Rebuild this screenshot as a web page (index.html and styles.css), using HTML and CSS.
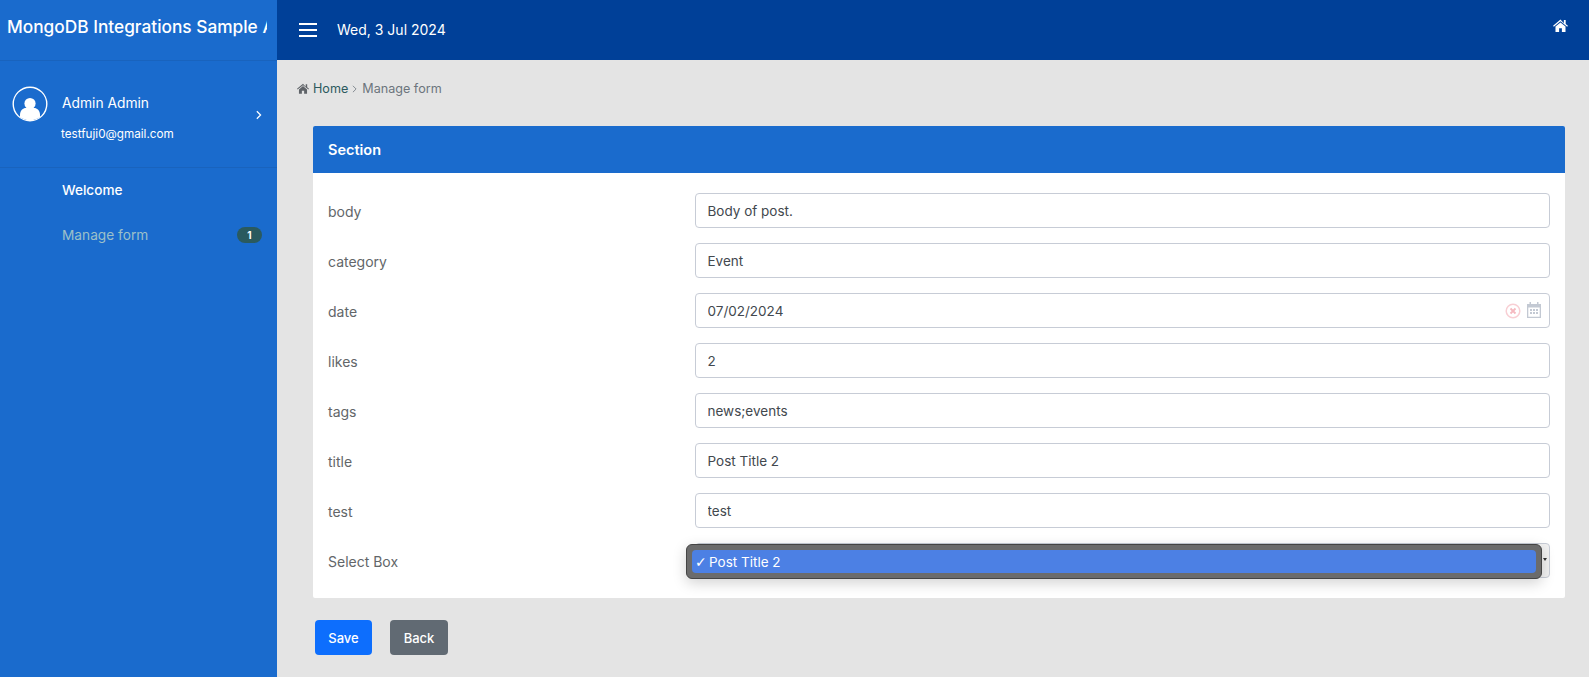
FILE: index.html
```html
<!DOCTYPE html>
<html lang="en">
<head>
<meta charset="utf-8">
<title>Manage form</title>
<link rel="stylesheet" href="styles.css">
</head>
<body>
<div class="app">
  <aside class="sidebar">
    <div class="brand"><span class="brand-text">MongoDB Integrations Sample App</span></div>
    <div class="user">
      <div class="user-top">
        <svg class="avatar" viewBox="0 0 36 36"><defs><clipPath id="av"><circle cx="18" cy="18" r="16.4"/></clipPath></defs><circle cx="18" cy="18" r="16.8" fill="none" stroke="#fff" stroke-width="1.4"/><g clip-path="url(#av)" fill="#fff"><circle cx="18" cy="17.5" r="5.6"/><path d="M8 34v-5c0-4.500 3-7 6-7h8c3 0 6 2.500 6 7v5z"/></g></svg>
        <span class="user-name">Admin Admin</span>
      </div>
      <div class="user-mail">testfuji0@gmail.com</div>
      <svg class="user-chev" viewBox="0 0 8 12"><path d="M2 1.500 6.500 6 2 10.500" fill="none" stroke="#fff" stroke-width="1.500"/></svg>
    </div>
    <nav class="nav">
      <a class="nav-item active">Welcome</a>
      <a class="nav-item muted">Manage form<span class="badge">1</span></a>
    </nav>
  </aside>
  <div class="main">
    <header class="topbar">
      <div class="burger"><i></i><i></i><i></i></div>
      <span class="date">Wed, 3 Jul 2024</span>
      <svg class="top-home" viewBox="0 0 16 14"><path fill="#fff" d="M8 .6 0 7.400l.8 1L8 2.500l7.200 5.900.8-1-2.400-2V1.200h-2v3.500zM2.600 8.200V14h3.900v-4h3v4h3.900V8.200L8 3.800z"/></svg>
    </header>
    <div class="content">
      <div class="crumbs">
        <svg class="crumb-home" viewBox="0 0 16 14"><path fill="#5f6368" d="M8 .6 0 7.400l.8 1L8 2.500l7.200 5.900.8-1-2.400-2V1.200h-2v3.500zM2.600 8.200V14h3.900v-4h3v4h3.900V8.200L8 3.800z"/></svg>
        <a class="crumb-link">Home</a>
        <svg class="crumb-sep" viewBox="0 0 6 10"><path d="M1 1l4 4-4 4" fill="none" stroke="#6c757d" stroke-width="1"/></svg>
        <span class="crumb-cur">Manage form</span>
      </div>
      <section class="card">
        <div class="card-head">Section</div>
        <div class="card-body">
          <div class="row"><label class="lbl">body</label><div class="field"><input class="input" value="Body of post."></div></div>
          <div class="row"><label class="lbl">category</label><div class="field"><input class="input" value="Event"></div></div>
          <div class="row"><label class="lbl">date</label><div class="field"><input class="input" value="07/02/2024">
            <svg class="ic-clear" viewBox="0 0 16 16"><circle cx="8" cy="8" r="6.800" fill="none" stroke="#f8cfd4" stroke-width="1.500"/><path d="M5.500 5.500l5 5m0-5-5 5" stroke="#f5b9c0" stroke-width="1.800"/></svg>
            <svg class="ic-cal" viewBox="0 0 14 16"><path fill="#c3c9d3" d="M2.500 0h1.500v2h6V0h1.500v2H14v14H0V2h2.500zM1.300 5.500v9.200h11.400V5.500z"/><path fill="#c3c9d3" d="M3 7h2v2H3zM6 7h2v2H6zM9 7h2v2H9zM3 10h2v2H3zM6 10h2v2H6zM9 10h2v2H9z"/></svg>
          </div></div>
          <div class="row"><label class="lbl">likes</label><div class="field"><input class="input" value="2"></div></div>
          <div class="row"><label class="lbl">tags</label><div class="field"><input class="input" value="news;events"></div></div>
          <div class="row"><label class="lbl">title</label><div class="field"><input class="input" value="Post Title 2"></div></div>
          <div class="row"><label class="lbl">test</label><div class="field"><input class="input" value="test"></div></div>
          <div class="row"><label class="lbl">Select Box</label><div class="field"><div class="input select"><span class="caret"></span></div>
            <div class="popup"><div class="popup-opt"><span class="tick">✓</span>Post Title 2</div></div>
          </div></div>
        </div>
      </section>
      <div class="actions"><button class="btn save">Save</button><button class="btn back">Back</button></div>
    </div>
  </div>
</div>
</body>
</html>
```
FILE: styles.css
```css
* { box-sizing: border-box; }
html, body { margin: 0; height: 100%; overflow: hidden; }
body { font-family: Inter, "Liberation Sans", sans-serif; font-size: 14px; color: #495057; background: #e4e4e4; }
.app { display: flex; height: 677px; }
.sidebar { width: 277px; flex: none; background: #1a6bcd; color: #fff; }
.brand { height: 61px; padding: 15px 10px 0 7px; border-bottom: 1px solid #1963bd; }
.brand-text { display: block; overflow: hidden; white-space: nowrap; font-size: 17.300px; font-weight: 500; line-height: 24px; }
.user { position: relative; height: 107px; padding: 25px 12px 0; border-bottom: 1px solid #1963bd; }
.user-top { display: flex; align-items: center; gap: 14px; }
.avatar { width: 36px; height: 36px; flex: none; }
.user-name { font-size: 13.800px; font-weight: 400; position: relative; top: -1px; }
.user-mail { margin: 4px 0 0 49px; font-size: 11.700px; line-height: 16px; }
.user-chev { position: absolute; left: 255px; top: 49px; width: 7px; height: 10px; }
.nav-item { display: flex; align-items: center; height: 45px; padding: 0 15px 0 62px; font-size: 13.700px; font-weight: 400; }
.nav-item.active { height: 44px; font-size: 13.600px; font-weight: 450; color: #fff; }
.nav-item.muted { color: #9cc0c9; justify-content: space-between; }
.badge { width: 25px; height: 16px; border-radius: 8px; background: #2a5a5e; color: #fff; font-size: 10px; font-weight: 700; line-height: 16px; text-align: center; }
.main { flex: 1; min-width: 0; }
.topbar { height: 60px; background: #004098; display: flex; align-items: center; color: #fff; position: relative; }
.burger { margin-left: 22px; width: 18px; display: flex; flex-direction: column; gap: 4px; }
.burger i { display: block; height: 2px; background: #fff; }
.date { margin-left: 20px; font-size: 14px; font-weight: 400; position: relative; top: -1px; }
.top-home { position: absolute; right: 21px; top: 19px; width: 15px; height: 13px; }
.content { padding: 0 24px 0 20px; }
.crumbs { height: 66px; padding: 21px 0 0 0; display: flex; align-items: flex-start; font-size: 12.600px; line-height: 16px; color: #6c757d; }
.crumb-home { width: 12px; height: 11px; margin: 2px 4px 0 0; }
.crumb-link { color: #2c5a5e; }
.crumb-sep { width: 5px; height: 8px; margin: 4px 5px 0 4px; }
.crumb-cur { color: #6c757d; }
.card { width: 1252px; margin-left: 16px; background: #fff; border-radius: 2px; }
.card-head { height: 47px; background: #1a6bcd; color: #fff; padding: 0 15px; font-size: 14.500px; font-weight: 600; line-height: 47px; border-radius: 2px 2px 0 0; }
.card-body { padding: 20px 15px 5px; }
.row { display: flex; height: 50px; }
.lbl { width: 367px; flex: none; font-size: 14px; line-height: 38px; color: #626669; }
.field { position: relative; width: 855px; height: 35px; }
.input { display: block; width: 100%; height: 35px; border: 1px solid #c7ccd6; border-radius: 4px; padding: 0 11.500px; font: 400 13.500px/33px Inter, "Liberation Sans", sans-serif; color: #42484e; background: #fff; outline: none; }
.select { background: #f1f1f1; }
.caret { position: absolute; right: 3px; top: 15px; border: 2px solid transparent; border-top: 3px solid #333; }
.ic-clear { position: absolute; right: 29px; top: 10px; width: 16px; height: 16px; }
.ic-cal { position: absolute; right: 9px; top: 9px; width: 14px; height: 16px; }
.popup { position: absolute; left: -9px; top: 1px; width: 856px; height: 35px; background: #6b6b6b; border: 1px solid #444; border-radius: 6px; padding: 5px; box-shadow: 0 4px 14px rgba(0,0,0,.18); }
.popup-opt { height: 23px; background: #4c80e4; border-radius: 4px; color: #fff; font-size: 13.500px; line-height: 24px; padding-left: 3px; }
.tick { display: inline-block; width: 14px; font-size: 14px; font-weight: 700; font-family: "DejaVu Sans", sans-serif; }
.actions { display: flex; gap: 18px; margin: 22px 0 0 18px; }
.btn { height: 35px; border: 0; border-radius: 4px; padding: 0; color: #fff; font: 500 13px Inter, "Liberation Sans", sans-serif; }
.save { background: #0d6efd; width: 57px; }
.back { background: #616a73; width: 58px; }
```
